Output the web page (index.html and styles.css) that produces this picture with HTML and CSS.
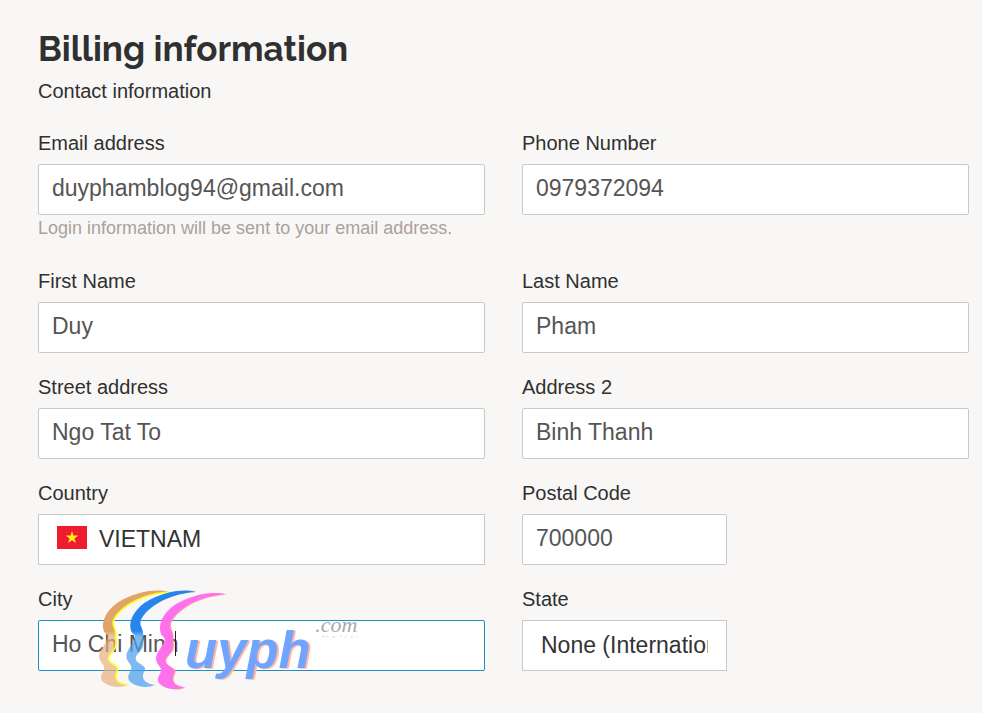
FILE: index.html
```html
<!DOCTYPE html>
<html lang="en">
  <head>
    <meta charset="UTF-8" />
    <meta name="viewport" content="width=device-width, initial-scale=1.0" />
    <title>Billing information</title>
    <link rel="stylesheet" href="styles.css">
  </head>
  <body>
    <main class="billing">
      <h1>Billing information</h1>
      <p class="subtitle">Contact information</p>

      <form class="billing-form">
        <div class="field">
          <label for="email">Email address</label>
          <input type="email" id="email" value="duyphamblog94@gmail.com" />
          <p class="help">Login information will be sent to your email address.</p>
        </div>
        <div class="field">
          <label for="phone">Phone Number</label>
          <input type="tel" id="phone" value="0979372094" />
        </div>

        <div class="field">
          <label for="first-name">First Name</label>
          <input type="text" id="first-name" value="Duy" />
        </div>
        <div class="field">
          <label for="last-name">Last Name</label>
          <input type="text" id="last-name" value="Pham" />
        </div>

        <div class="field">
          <label for="street">Street address</label>
          <input type="text" id="street" value="Ngo Tat To" />
        </div>
        <div class="field">
          <label for="address2">Address 2</label>
          <input type="text" id="address2" value="Binh Thanh" />
        </div>

        <div class="field">
          <label for="country">Country</label>
          <div class="control">
            <select id="country" class="with-flag">
              <option>VIETNAM</option>
            </select>
            <svg class="flag" viewBox="0 0 30 23" aria-hidden="true">
              <rect width="30" height="23" fill="#ee1c2e" />
              <path fill="#ffed1f" d="M15 5l1.5 4.5h4.9l-4 2.9 1.6 4.7-4-2.9-4 2.9 1.6-4.7-4-2.9h4.9z" />
            </svg>
          </div>
        </div>
        <div class="field short">
          <label for="postal">Postal Code</label>
          <input type="text" id="postal" value="700000" />
        </div>

        <div class="field">
          <label for="city">City</label>
          <div class="control">
            <input type="text" id="city" class="active" value="Ho Chi Minh" />
            <span class="caret"></span>
            <svg class="watermark" viewBox="24 24 792 312" aria-hidden="true">
              <defs>
                <linearGradient id="tan" x1="0" y1="0" x2="0" y2="1">
                  <stop offset="0.42" stop-color="#e0a468" />
                  <stop offset="0.48" stop-color="#e6b07c" stop-opacity="0.7" />
                </linearGradient>
                <linearGradient id="blue" x1="0" y1="0" x2="0" y2="1">
                  <stop offset="0.42" stop-color="#2585ea" />
                  <stop offset="0.48" stop-color="#4a9fee" stop-opacity="0.72" />
                </linearGradient>
                <!-- one face profile, repeated in three colours -->
                <path id="face" d="M236 36C195 24 130 38 82 68C49 92 34 124 40 148C43 166 57 160 52 177C46 196 27 209 27 229C28 247 43 251 42 264C41 277 31 281 33 296C38 315 82 329 113 315C93 312 78 305 77 291C76 279 84 275 83 264C79 254 54 249 55 235C58 218 75 213 77 199C80 184 77 173 77 157C76 146 68 138 69 127C72 109 92 90 112 76C151 50 188 40 236 36Z" />
                <path id="edge" d="M236 36C188 40 151 50 112 76C92 90 72 109 69 127C68 138 76 146 77 157C77 173 80 184 77 199C75 213 58 218 55 235C54 249 79 254 83 264C84 275 76 279 77 291C78 305 93 312 113 315" />
              </defs>
              <use href="#face" fill="url(#tan)" />
              <use href="#edge" fill="none" stroke="#ffff18" stroke-width="5" />
              <use href="#face" x="82" fill="url(#blue)" />
              <use href="#face" x="174" y="8" fill="#ffa08c" opacity="0.8" />
              <use href="#face" x="171" y="7" fill="#ff6df0" opacity="0.95" />
              <text class="mark" x="285" y="263">uyph</text>
              <text class="mark-com" x="676" y="157">.com</text>
              <path d="M696 170h10M708 167l8 5M727 171h9M750 170l5-3M764 172l6-4M782 171h8M798 167l4 4" stroke="#dcdcdc" stroke-width="3" fill="none" />
            </svg>
          </div>
        </div>
        <div class="field short">
          <label for="state">State</label>
          <select id="state">
            <option>None (International)</option>
          </select>
        </div>
      </form>
    </main>
  </body>
</html>
```
FILE: styles.css
```css
* {
  box-sizing: border-box;
}

body {
  margin: 0;
  background-color: #f8f7f5;
  color: #303030;
  font-family: "Liberation Sans", Arial, sans-serif;
  font-size: 20px;
  line-height: 24px;
}

.billing {
  padding: 28px 13px 32px 38px;
}

h1 {
  margin: 0;
  font-family: Raleway, Lato, sans-serif;
  font-size: 35px;
  font-weight: 700;
  line-height: 42px;
}

.subtitle {
  margin: 9px 0 28px;
}

.billing-form {
  display: grid;
  grid-template-columns: 1fr 1fr;
  column-gap: 37px;
  row-gap: 22px;
}

.field {
  display: flex;
  flex-direction: column;
  min-width: 0;
}

.field label {
  margin-bottom: 9px;
}

.short input,
.short select {
  width: 205px;
}

.control {
  position: relative;
}

input,
select {
  display: block;
  width: 100%;
  height: 51px;
  margin: 0;
  padding: 0 13px 3px;
  border: 1px solid #c9c9c9;
  border-radius: 2px;
  background-color: #fff;
  color: #555;
  font-family: inherit;
  font-size: 23px;
  outline: none;
}

select {
  appearance: none;
  padding: 0 18px 2px;
  border-radius: 0;
  color: #333;
}

select.with-flag {
  padding-left: 60px;
}

input.active {
  border-color: #1c8fc6;
}

.help {
  margin: 0 0 6px;
  color: #aaa19b;
  font-size: 18px;
  line-height: 26px;
}

.flag {
  position: absolute;
  top: 12px;
  left: 19px;
  width: 30px;
  height: 23px;
}

.caret {
  position: absolute;
  top: 11px;
  left: 137px;
  width: 1px;
  height: 25px;
  background-color: #222;
}

.watermark {
  position: absolute;
  top: -32px;
  left: 60px;
  width: 264px;
  height: 104px;
  pointer-events: none;
}

.mark {
  font-family: "Liberation Sans", Arial, sans-serif;
  font-size: 158px;
  font-style: italic;
  font-weight: 700;
  fill: #70a5ff;
  filter: drop-shadow(6px 2px 0 #ffb3a3);
}

.mark-com {
  font-family: "Liberation Serif", serif;
  font-size: 66px;
  font-style: italic;
  fill: #aaa;
}
```
